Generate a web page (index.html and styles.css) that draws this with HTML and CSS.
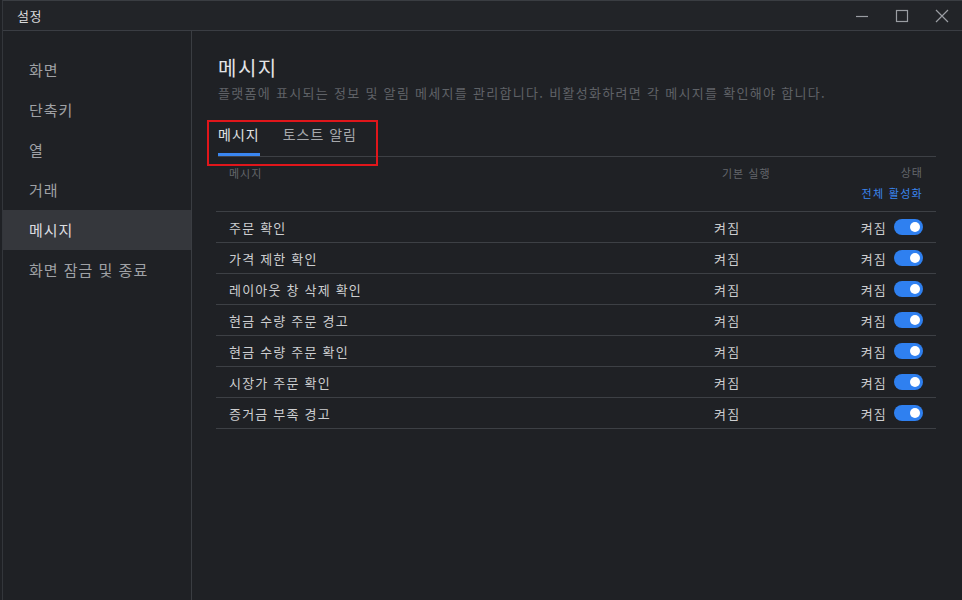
FILE: index.html
```html
<!DOCTYPE html>
<html lang="ko">
<head>
<meta charset="utf-8">
<link rel="stylesheet" href="styles.css">
</head>
<body>
<div class="window">
  <div class="titlebar">
    <span class="wtitle">설정</span>
    <div class="controls">
      <svg class="ctl" width="16" height="16" viewBox="0 0 16 16"><path d="M2 8.5h12" stroke="#9a9da2" stroke-width="1.2" fill="none"/></svg>
      <svg class="ctl" width="16" height="16" viewBox="0 0 16 16"><rect x="2.5" y="2.5" width="11" height="11" stroke="#9a9da2" stroke-width="1.2" fill="none"/></svg>
      <svg class="ctl" width="16" height="16" viewBox="0 0 16 16"><path d="M2 2l12 12M14 2L2 14" stroke="#9a9da2" stroke-width="1.2" fill="none"/></svg>
    </div>
  </div>
  <div class="main">
    <nav class="sidebar">
      <div class="nav-item">화면</div>
      <div class="nav-item">단축키</div>
      <div class="nav-item">열</div>
      <div class="nav-item">거래</div>
      <div class="nav-item active">메시지</div>
      <div class="nav-item">화면 잠금 및 종료</div>
    </nav>
    <section class="content">
      <h1 class="title">메시지</h1>
      <p class="subtitle">플랫폼에 표시되는 정보 및 알림 메세지를 관리합니다. 비활성화하려면 각 메시지를 확인해야 합니다.</p>
      <div class="tabs">
        <div class="tab active">메시지</div>
        <div class="tab">토스트 알림</div>
        <div class="highlight"></div>
      </div>
      <div class="table">
        <div class="thead">
          <div class="th-name">메시지</div>
          <div class="th-def">기본 실행</div>
          <div class="th-state">
            <div>상태</div>
            <div class="enable-all">전체 활성화</div>
          </div>
        </div>
        <div class="row"><div class="name">주문 확인</div><div class="def">켜짐</div><div class="state">켜짐<span class="toggle"></span></div></div>
        <div class="row"><div class="name">가격 제한 확인</div><div class="def">켜짐</div><div class="state">켜짐<span class="toggle"></span></div></div>
        <div class="row"><div class="name">레이아웃 창 삭제 확인</div><div class="def">켜짐</div><div class="state">켜짐<span class="toggle"></span></div></div>
        <div class="row"><div class="name">현금 수량 주문 경고</div><div class="def">켜짐</div><div class="state">켜짐<span class="toggle"></span></div></div>
        <div class="row"><div class="name">현금 수량 주문 확인</div><div class="def">켜짐</div><div class="state">켜짐<span class="toggle"></span></div></div>
        <div class="row"><div class="name">시장가 주문 확인</div><div class="def">켜짐</div><div class="state">켜짐<span class="toggle"></span></div></div>
        <div class="row"><div class="name">증거금 부족 경고</div><div class="def">켜짐</div><div class="state">켜짐<span class="toggle"></span></div></div>
      </div>
    </section>
  </div>
</div>
</body>
</html>
```
FILE: styles.css
```css
* { box-sizing: border-box; }
html, body { margin: 0; padding: 0; }
body {
  background: #1f2125;
  font-family: "Noto Sans CJK KR", "Noto Sans", sans-serif;
  color: #d4d5d7;
  width: 962px;
  height: 600px;
  overflow: hidden;
}
.window {
  height: 600px;
  display: flex;
  flex-direction: column;
  border-left: 1px solid #33363b;
  margin-left: 2px;
  border-top: 1px solid #3a3d42;
}
.titlebar {
  height: 30px;
  flex: none;
  display: flex;
  align-items: center;
  justify-content: space-between;
  border-bottom: 1px solid #3a3d43;
  background: #222428;
}
.wtitle {
  font-size: 13px;
  color: #d8d9db;
  padding-left: 14px;
  letter-spacing: 0.5px;
}
.controls {
  display: flex;
  gap: 24px;
  padding-right: 12px;
}
.ctl { display: block; }
.main {
  flex: 1;
  display: flex;
}
.sidebar {
  width: 189px;
  flex: none;
  border-right: 1px solid #3a3d42;
  padding-top: 19px;
}
.nav-item {
  height: 40px;
  line-height: 40px;
  padding-left: 26px;
  font-size: 15px;
  letter-spacing: 1px;
  color: #9fa1a5;
}
.nav-item.active {
  background: #35373c;
  color: #dcdde0;
}
.content {
  flex: 1;
  padding: 23px 26px 0 24px;
}
.title {
  margin: 0 0 0 2px;
  font-size: 20px;
  font-weight: 400;
  line-height: 28px;
  letter-spacing: 1.5px;
  color: #e2e3e5;
}
.subtitle {
  margin: 1px 0 0 2px;
  font-size: 13px;
  line-height: 20px;
  letter-spacing: 1.3px;
  color: #5f6267;
}
.tabs {
  position: relative;
  margin-top: 21px;
  margin-left: 2px;
  display: flex;
  gap: 23px;
  border-bottom: 1px solid #3d4045;
  height: 33px;
}
.tab {
  font-size: 14px;
  letter-spacing: 1px;
  color: #a6a8ac;
  line-height: 20px;
  height: 32px;
}
.tab.active {
  color: #e0e1e3;
  border-bottom: 3px solid #3a86f0;
}
.highlight {
  position: absolute;
  left: -11px;
  top: -4px;
  width: 171px;
  height: 46px;
  border: 2px solid #e0161b;
}
.thead {
  display: grid;
  grid-template-columns: 1fr 140px 80px;
  height: 55px;
  border-bottom: 1px solid #3d4045;
  font-size: 11px;
  letter-spacing: 1px;
  color: #64676c;
  padding: 8px 13px 0 13px;
}
.th-def { padding-left: 19px; }
.th-state {
  text-align: right;
  line-height: 15px;
}
.enable-all {
  color: #3a86f0;
  margin-top: 6px;
  letter-spacing: 1.3px;
}
.row {
  display: grid;
  grid-template-columns: 1fr 140px 80px;
  height: 31px;
  align-items: center;
  border-bottom: 1px solid #3d4045;
  font-size: 13px;
  letter-spacing: 1.2px;
  padding: 0 13px 0 13px;
  color: #cdced0;
}
.def { padding-left: 11px; }
.state {
  display: flex;
  justify-content: flex-end;
  align-items: center;
  gap: 7px;
}
.toggle {
  width: 29px;
  height: 16px;
  border-radius: 8px;
  background: #2f80f0;
  position: relative;
  display: inline-block;
}
.toggle::after {
  content: "";
  position: absolute;
  right: 3px;
  top: 3px;
  width: 10px;
  height: 10px;
  border-radius: 50%;
  background: #ffffff;
}
```
